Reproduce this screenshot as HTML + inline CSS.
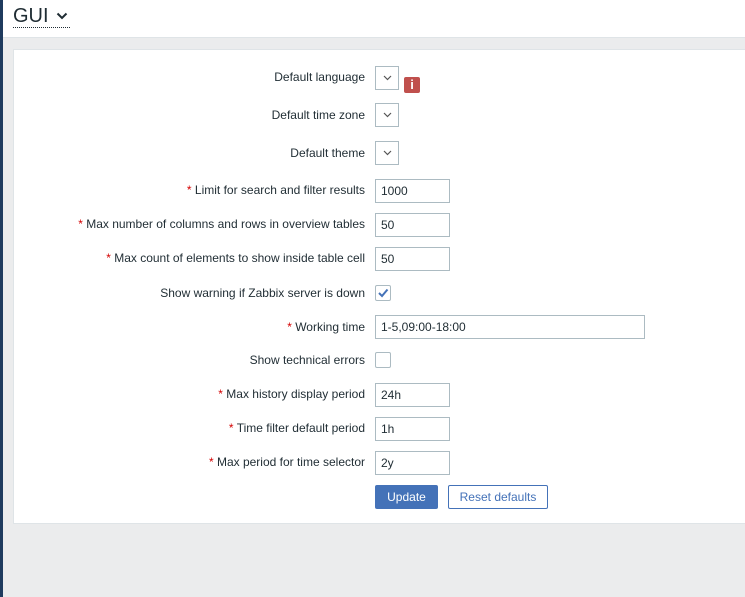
<!DOCTYPE html>
<html><head><style>
*{box-sizing:border-box;margin:0;padding:0}
body{width:745px;height:597px;overflow:hidden;background:#ebeced;font-family:"Liberation Sans",Arial,sans-serif;font-size:12px;color:#1f2c33;position:relative}
.side{position:absolute;left:0;top:0;width:3px;height:597px;background:#1f3b5e}
.hdr{position:absolute;left:3px;top:0;right:0;height:38px;background:#fff;border-bottom:1px solid #dfe4e7}
.title{position:absolute;left:10px;top:5px;font-size:20px;color:#1f2c33;border-bottom:1px dotted #1f2c33;line-height:22px;padding-right:2px}
.panel{position:absolute;left:13px;top:49px;width:740px;height:475px;background:#fff;border:1px solid #dfe4e7}
.lab{position:absolute;right:380px;text-align:right;white-space:nowrap;line-height:14px}
.req{color:#d40000}
.inp{position:absolute;left:375px;height:24px;border:1px solid #acbbc2;background:#fff;padding:0 5px;line-height:22px}
.sel{position:absolute;left:375px;width:24px;height:24px;border:1px solid #acbbc2;background:#fff}
.sel svg{position:absolute;left:7px;top:8px}
.cb{position:absolute;left:375px;width:16px;height:16px;border:1px solid #acbbc2;border-radius:2px;background:#fff}
.info{position:absolute;left:404px;top:77px;width:16px;height:16px;background:#c0504d;border-radius:2px;color:#fff;font-weight:bold;text-align:center;line-height:16px;font-size:13px}
.btn{position:absolute;top:485px;height:24px;line-height:22px;text-align:center;border-radius:2px}
</style></head><body>
<div class="side"></div>
<div class="hdr"><div class="title">GUI <svg width="12" height="8" viewBox="0 0 12 8" style="margin-left:2px;vertical-align:2px"><path d="M1.5 1.5 L6 6 L10.5 1.5" stroke="#1f2c33" stroke-width="2" fill="none"/></svg></div></div>
<div class="panel"></div>
<div style="position:absolute;left:0;top:0;width:745px">
<div class="lab" style="top:70px;left:auto">Default language</div>
<div class="sel" style="top:66px"><svg width="9" height="6"><path d="M1 1L4.5 4.5L8 1" stroke="#555" stroke-width="1.2" fill="none"/></svg></div>
<div class="info">i</div>
<div class="lab" style="top:108px">Default time zone</div>
<div class="sel" style="top:103px"><svg width="9" height="6"><path d="M1 1L4.5 4.5L8 1" stroke="#555" stroke-width="1.2" fill="none"/></svg></div>
<div class="lab" style="top:146px">Default theme</div>
<div class="sel" style="top:141px"><svg width="9" height="6"><path d="M1 1L4.5 4.5L8 1" stroke="#555" stroke-width="1.2" fill="none"/></svg></div>
<div class="lab" style="top:183px"><span class="req">*</span> Limit for search and filter results</div>
<div class="inp" style="top:179px;width:75px">1000</div>
<div class="lab" style="top:217px"><span class="req">*</span> Max number of columns and rows in overview tables</div>
<div class="inp" style="top:213px;width:75px">50</div>
<div class="lab" style="top:251px"><span class="req">*</span> Max count of elements to show inside table cell</div>
<div class="inp" style="top:247px;width:75px">50</div>
<div class="lab" style="top:286px">Show warning if Zabbix server is down</div>
<div class="cb" style="top:285px"><svg width="14" height="14" style="position:absolute;left:0;top:0"><path d="M3 7L6 10L11.5 3.5" stroke="#4472b8" stroke-width="2" fill="none"/></svg></div>
<div class="lab" style="top:320px"><span class="req">*</span> Working time</div>
<div class="inp" style="top:315px;width:270px">1-5,09:00-18:00</div>
<div class="lab" style="top:353px">Show technical errors</div>
<div class="cb" style="top:352px"></div>
<div class="lab" style="top:387px"><span class="req">*</span> Max history display period</div>
<div class="inp" style="top:383px;width:75px">24h</div>
<div class="lab" style="top:421px"><span class="req">*</span> Time filter default period</div>
<div class="inp" style="top:417px;width:75px">1h</div>
<div class="lab" style="top:455px"><span class="req">*</span> Max period for time selector</div>
<div class="inp" style="top:451px;width:75px">2y</div>
<div class="btn" style="left:375px;width:63px;background:#4472b8;color:#fff;border:1px solid #4472b8">Update</div>
<div class="btn" style="left:448px;width:100px;background:#fff;color:#4472b8;border:1px solid #4472b8">Reset defaults</div>
</div>
</body></html>
